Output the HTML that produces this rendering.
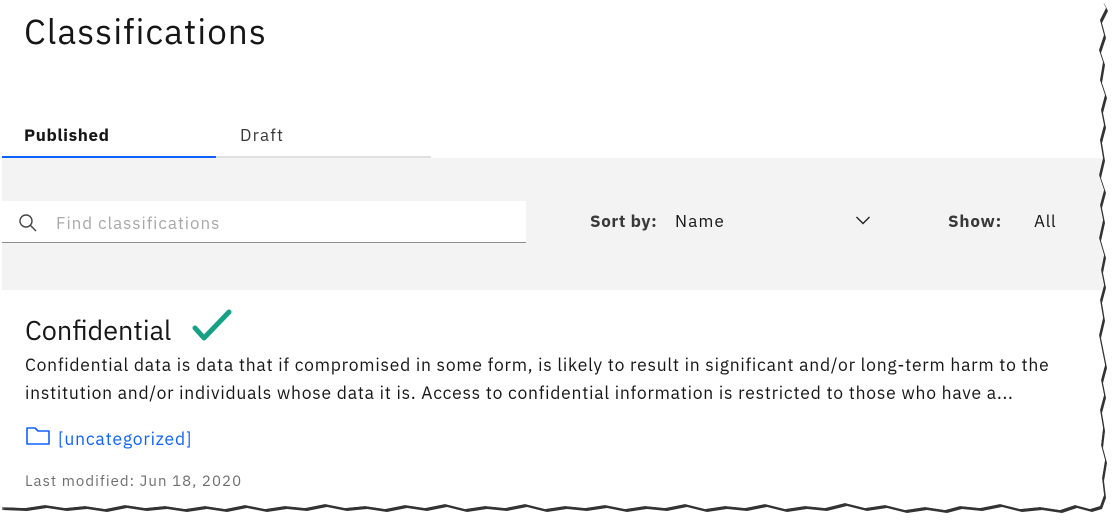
<!DOCTYPE html>
<html><head><meta charset="utf-8"><style>
*{margin:0;padding:0;box-sizing:border-box}
body{width:1119px;height:528px;background:#fff;position:relative;overflow:hidden;font-family:"IBM Plex Sans","Liberation Sans",sans-serif;color:#161616}
#page{position:absolute;left:0;top:0;width:1119px;height:528px}
#shadow{position:absolute;left:2px;top:3px;width:1119px;height:528px;background:#333;filter:blur(1.5px)}
.gray{position:absolute;left:2px;top:158px;width:1110px;height:132px;background:#f3f3f3}
h1{position:absolute;left:24px;top:8px;font-size:35px;font-weight:400;letter-spacing:1.1px}
.tab{position:absolute;top:124px;font-size:17px}
.search{position:absolute;left:2px;top:201px;width:524px;height:42px;background:#fff;border-bottom:1.5px solid #8d8d8d}
.search span{position:absolute;left:54px;top:11px;font-size:17px;color:#a8a8a8;letter-spacing:.95px}
.lbl{position:absolute;top:210px;font-size:17px}
.card{position:absolute;left:3px;top:290px;width:1110px;height:230px;background:#fff}
</style></head><body>
<div id="shadow" class="torn"></div>
<div id="page" class="torn" style="background:#fff">
<h1>Classifications</h1>
<div class="tab" style="left:24px;font-weight:700;letter-spacing:.6px">Published</div>
<div class="tab" style="left:240px;color:#393939;letter-spacing:1.2px">Draft</div>
<div class="gray"></div>
<div style="position:absolute;left:2px;top:156px;width:214px;height:2px;background:#0f62fe"></div>
<div style="position:absolute;left:216px;top:156px;width:215px;height:2px;background:#e0e0e0"></div>
<div class="search">
<svg style="position:absolute;left:16px;top:12px" width="20" height="20" viewBox="0 0 20 20"><circle cx="8" cy="8" r="6" fill="none" stroke="#444" stroke-width="1.4"/><path d="M12.3 12.3L18 18" stroke="#444" stroke-width="1.4"/></svg>
<span>Find classifications</span></div>
<div class="lbl" style="left:590px;font-weight:700;color:#393939;letter-spacing:.6px">Sort by:</div>
<div class="lbl" style="left:675px;letter-spacing:1.2px">Name</div>
<svg style="position:absolute;left:855px;top:214px" width="16" height="12" viewBox="0 0 16 12"><path d="M1.5 3L8 9.5 14.5 3" fill="none" stroke="#222" stroke-width="1.4"/></svg>
<div class="lbl" style="left:948px;font-weight:700;color:#393939;letter-spacing:.8px">Show:</div>
<div class="lbl" style="left:1034px;letter-spacing:.8px">All</div>
<div class="card"></div>
<div style="position:absolute;left:25px;top:313px;font-size:27px">Confidential</div>
<svg style="position:absolute;left:190px;top:308px" width="45" height="36" viewBox="0 0 45 36"><path d="M5 20L14 30L39 4" fill="none" stroke="#16a085" stroke-width="5" stroke-linecap="round" stroke-linejoin="round"/></svg>
<div style="position:absolute;left:25px;top:351px;font-size:17.5px;line-height:28px;color:#161616;width:1075px;letter-spacing:.75px;white-space:nowrap">Confidential data is data that if compromised in some form, is likely to result in significant and/or long-term harm to the<br>institution and/or individuals whose data it is. Access to confidential information is restricted to those who have a...</div>
<svg style="position:absolute;left:26px;top:426px" width="25" height="20" viewBox="0 0 25 20"><path d="M1 2h8l3 3h11v13H1z" fill="none" stroke="#0f62fe" stroke-width="1.6" stroke-linejoin="round"/></svg>
<div style="position:absolute;left:58px;top:427px;font-size:17.5px;color:#0f62fe;letter-spacing:.8px">[uncategorized]</div>
<div style="position:absolute;left:25px;top:472px;font-size:15px;color:#6f6f6f;letter-spacing:1.05px">Last modified: Jun 18, 2020</div>
</div>
<style>
.torn{clip-path:polygon(0 0,1102px 0,1106px 8px,1100px 20px,1104px 35px,1099px 50px,1103px 62px,1100px 80px,1105px 95px,1101px 110px,1104px 125px,1100px 140px,1103px 158px,1099px 175px,1104px 190px,1100px 205px,1103px 220px,1099px 238px,1104px 255px,1101px 270px,1104px 285px,1100px 300px,1103px 318px,1099px 335px,1102px 350px,1105px 365px,1101px 380px,1104px 395px,1100px 410px,1103px 428px,1101px 445px,1105px 460px,1102px 478px,1104px 495px,1100px 506px,1090px 509px,1075px 505px,1060px 510px,1040px 507px,1020px 509px,1000px 504px,980px 508px,960px 506px,945px 510px,925px 507px,905px 510px,885px 505px,865px 508px,845px 503px,825px 508px,805px 506px,785px 509px,765px 504px,745px 508px,725px 506px,705px 509px,685px 504px,665px 508px,645px 506px,625px 509px,605px 505px,585px 508px,565px 506px,545px 509px,525px 504px,505px 508px,485px 506px,465px 509px,445px 504px,425px 508px,405px 505px,385px 509px,365px 506px,345px 508px,325px 504px,305px 508px,285px 506px,265px 509px,245px 505px,225px 509px,205px 506px,185px 509px,165px 506px,145px 508px,125px 505px,105px 509px,85px 506px,65px 508px,45px 505px,25px 508px,0 507px)}
</style>
</body></html>
